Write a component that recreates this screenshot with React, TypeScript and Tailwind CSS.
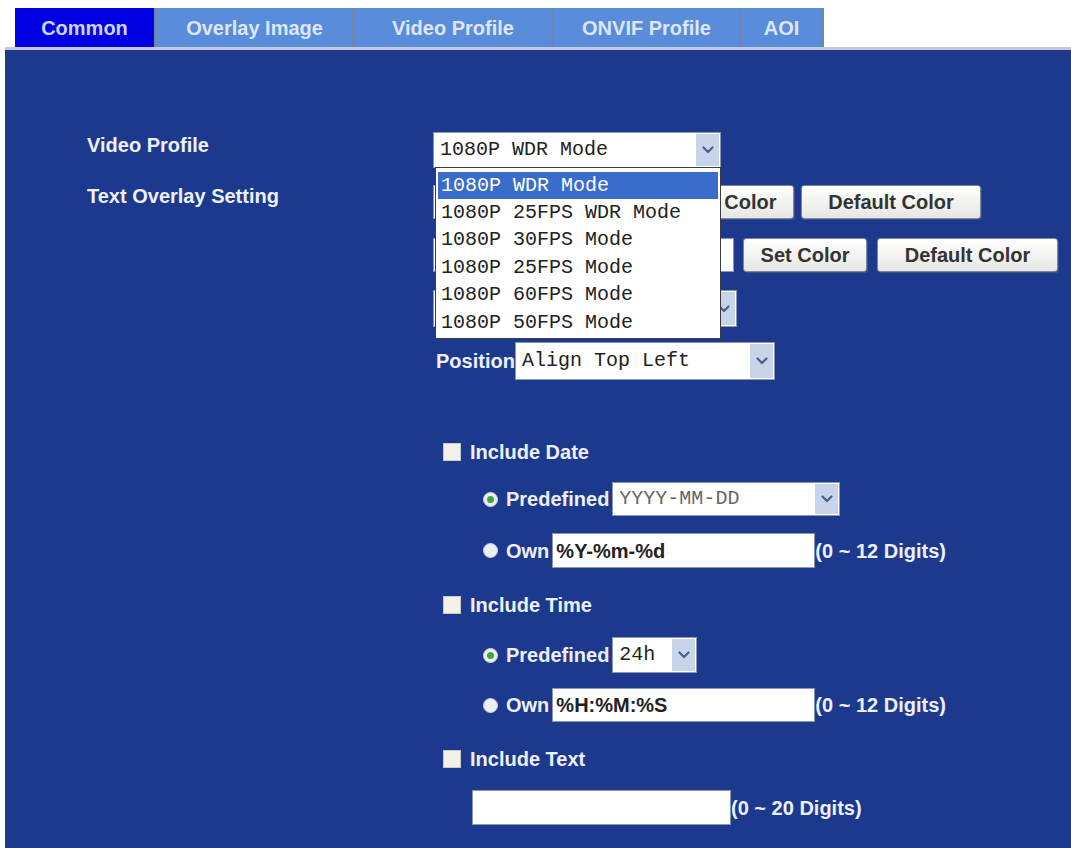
import React from 'react'

const tabs = [
  { label: 'Common', width: 'w-[142px]', active: true },
  { label: 'Overlay Image', width: 'w-[198px]', active: false },
  { label: 'Video Profile', width: 'w-[199px]', active: false },
  { label: 'ONVIF Profile', width: 'w-[188px]', active: false },
  { label: 'AOI', width: 'w-[82px]', active: false },
]

const profiles = [
  '1080P WDR Mode',
  '1080P 25FPS WDR Mode',
  '1080P 30FPS Mode',
  '1080P 25FPS Mode',
  '1080P 60FPS Mode',
  '1080P 50FPS Mode',
]

const Chevron = () => (
  <svg width="12" height="8" viewBox="0 0 12 8" fill="none">
    <path d="M1.5 1.5 L6 6 L10.5 1.5" stroke="#4b5f8c" strokeWidth="2.2" strokeLinecap="round" strokeLinejoin="round" />
  </svg>
)

type SelectProps = {
  value: string
  className: string
  textClass?: string
  children?: React.ReactNode
}

// fake select box: white field plus the grey-blue arrow cell
const FakeSelect: React.FC<SelectProps> = ({ value, className, textClass, children }) => (
  <div className={`relative flex bg-white border border-[#8797b6] ${className}`}>
    <div className={`flex-1 flex items-center pl-[6px] font-['Liberation_Mono'] font-normal text-[20px] whitespace-nowrap overflow-hidden ${textClass ?? 'text-[#222]'}`}>
      {value}
    </div>
    <div className="w-[23px] my-[1px] mr-[1px] flex items-center justify-center bg-[#c7d4ea]">
      <Chevron />
    </div>
    {children}
  </div>
)

const Btn = ({ label, className }: { label: string; className: string }) => (
  <div
    className={`h-[34px] flex items-center justify-center rounded-[3px] border border-[#7d8799] bg-gradient-to-b from-[#ffffff] to-[#e6e6e2] text-[20px] text-[#333] shadow-[1px_1px_0_#3a4f8a] ${className}`}
  >
    {label}
  </div>
)

const Checkbox = () => (
  <div className="w-[18px] h-[18px] bg-[#f2f1ea] border border-[#c9c9c0]" />
)

const Radio = ({ checked }: { checked?: boolean }) => (
  <div className="w-[15px] h-[15px] rounded-full bg-[#eceff3] border border-[#c9ced8] flex items-center justify-center">
    {checked && <div className="w-[7px] h-[7px] rounded-full bg-[#3fa83a]" />}
  </div>
)

const TextBox = ({ value, className }: { value?: string; className: string }) => (
  <div className={`flex items-center bg-white border border-[#8797b6] pl-[3px] text-[20px] text-[#222] ${className}`}>
    {value}
  </div>
)

export default function App() {
  return (
    <div className="w-[1071px] h-[848px] overflow-hidden bg-white font-['Liberation_Sans',Arial,sans-serif] font-bold">
      <div className="flex pl-[15px] pt-[8px] h-[47px]">
        {tabs.map((t) => (
          <div
            key={t.label}
            className={`${t.width} h-full flex items-center justify-center text-[20px] border-r-[3px] border-[#6e86b4] ${
              t.active ? 'bg-[#0000e2] text-[#cdd3ff]' : 'bg-[#5a8cdc] text-[#dde7ff]'
            }`}
          >
            {t.label}
          </div>
        ))}
      </div>

      <div className="ml-[5px] h-[801px] border-t-[3px] border-[#c3c9d6] bg-[#1d398d] flex text-[#edf1ff] text-[20px]">
        <div className="w-[428px] pl-[82px] pt-[83px] flex flex-col">
          <div className="leading-[24px]">Video Profile</div>
          <div className="leading-[24px] mt-[27px]">Text Overlay Setting</div>
        </div>

        <div className="flex-1 pt-[82px] flex flex-col">
          <FakeSelect value="1080P WDR Mode" className="w-[288px] h-[36px] z-10">
            <div className="absolute top-full left-[1px] w-[286px] bg-white border border-[#3c3c3c] px-[2px] pt-[4px] pb-[2px] font-['Liberation_Mono'] font-normal text-[20px] text-[#222]">
              {profiles.map((p, i) => (
                <div
                  key={p}
                  className={`h-[27.4px] flex items-center pl-[3px] whitespace-nowrap ${i === 0 ? 'bg-[#3a6ccc] text-white' : ''}`}
                >
                  {p}
                </div>
              ))}
            </div>
          </FakeSelect>

          <div className="mt-[17px] h-[34px] flex items-center">
            <TextBox className="w-[225px] h-[34px]" />
            <Btn label="Set Color" className="ml-[12px] w-[124px]" />
            <Btn label="Default Color" className="ml-[7px] w-[180px]" />
          </div>

          <div className="mt-[19px] h-[34px] flex items-center">
            <TextBox className="w-[301px] h-[34px]" />
            <Btn label="Set Color" className="ml-[9px] w-[124px]" />
            <Btn label="Default Color" className="ml-[10px] w-[181px]" />
          </div>

          <div className="mt-[18px] h-[37px] flex items-center">
            <FakeSelect value="" className="w-[304px] h-[37px]" />
          </div>

          <div className="mt-[15px] h-[38px] flex items-center">
            <span className="ml-[3px] w-[79px]">Position</span>
            <FakeSelect value="Align Top Left" className="w-[260px] h-[38px]" />
          </div>

          <div className="mt-[60px] h-[24px] flex items-center pl-[10px] gap-[9px]">
            <Checkbox />
            <span>Include Date</span>
          </div>

          <div className="mt-[18px] h-[34px] flex items-center pl-[50px]">
            <Radio checked />
            <span className="ml-[8px]">Predefined</span>
            <FakeSelect value="YYYY-MM-DD" textClass="text-[#666] text-[18px]" className="ml-[3px] w-[228px] h-[34px]" />
          </div>

          <div className="mt-[17px] h-[35px] flex items-center pl-[50px]">
            <Radio />
            <span className="ml-[8px]">Own</span>
            <TextBox value="%Y-%m-%d" className="ml-[3px] w-[263px] h-[35px]" />
            <span>(0 ~ 12 Digits)</span>
          </div>

          <div className="mt-[25px] h-[24px] flex items-center pl-[10px] gap-[9px]">
            <Checkbox />
            <span>Include Time</span>
          </div>

          <div className="mt-[20px] h-[36px] flex items-center pl-[50px]">
            <Radio checked />
            <span className="ml-[8px]">Predefined</span>
            <FakeSelect value="24h" className="ml-[3px] w-[85px] h-[36px]" />
          </div>

          <div className="mt-[15px] h-[34px] flex items-center pl-[50px]">
            <Radio />
            <span className="ml-[8px]">Own</span>
            <TextBox value="%H:%M:%S" className="ml-[3px] w-[263px] h-[34px]" />
            <span>(0 ~ 12 Digits)</span>
          </div>

          <div className="mt-[25px] h-[24px] flex items-center pl-[10px] gap-[9px]">
            <Checkbox />
            <span>Include Text</span>
          </div>

          <div className="mt-[19px] h-[35px] flex items-center pl-[39px]">
            <TextBox className="w-[259px] h-[35px]" />
            <span>(0 ~ 20 Digits)</span>
          </div>
        </div>
      </div>
    </div>
  )
}
